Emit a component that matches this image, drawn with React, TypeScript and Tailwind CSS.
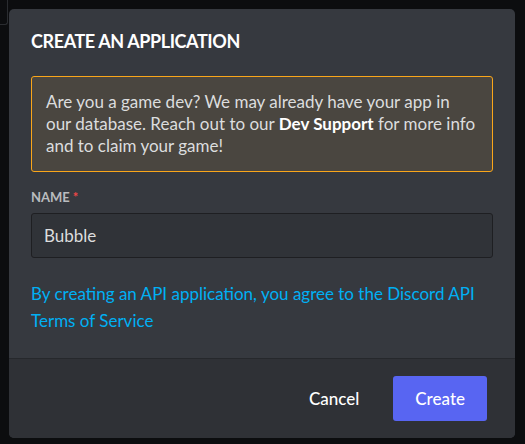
export default function App() {
  return (
    <div className="relative min-h-screen w-full bg-[#0c0d0f] pl-[9px] pt-[9px] font-['Lato',sans-serif]">
      {/* edge of the window behind the modal */}
      <div className="absolute left-0 top-0 h-[25px] w-[8px] rounded-br-[3px] border-b border-r border-[#2a2c30]" />

      <div className="w-[506px] overflow-hidden rounded-[5px] bg-[#36393f]">
        <div className="px-[22px] pt-[20px] pb-[24px]">
          <h2 className="text-[18px] font-bold uppercase leading-[24px] tracking-[-0.4px] text-white">
            Create an Application
          </h2>

          <div className="mt-[23px] rounded-[3px] border border-[#faa61a] bg-[#4a4640] px-[14px] py-[14px] text-[17px] leading-[22px] text-[#dcddde]">
            Are you a game dev? We may already have your app in our database. Reach out to our{" "}
            <span className="font-bold text-white">Dev Support</span> for more info and to claim your game!
          </div>

          <label className="mt-[17px] flex items-center gap-[3px] text-[13px] font-bold uppercase leading-[16px] text-[#b9bbbe]">
            Name <span className="text-[#f04747]">*</span>
          </label>

          <div className="mt-[8px] flex h-[45px] items-center rounded-[3px] border border-[#1e1f22] bg-[#303338] px-[12px] text-[17px] text-[#dcddde]">
            Bubble
          </div>

          <p className="mt-[23px] text-[17px] leading-[26.5px] text-[#00b0f4]">
            By creating an API application, you agree to the Discord API Terms of Service
          </p>
        </div>

        <div className="flex h-[80px] items-center justify-end gap-[12px] border-t border-[#26282c] bg-[#2f3136] pr-[28px]">
          <button className="h-[45px] px-[22px] text-[17px] font-medium text-white">Cancel</button>
          <button className="h-[45px] rounded-[3px] bg-[#5865f2] px-[22px] text-[17px] font-medium text-white">
            Create
          </button>
        </div>
      </div>
    </div>
  );
}
